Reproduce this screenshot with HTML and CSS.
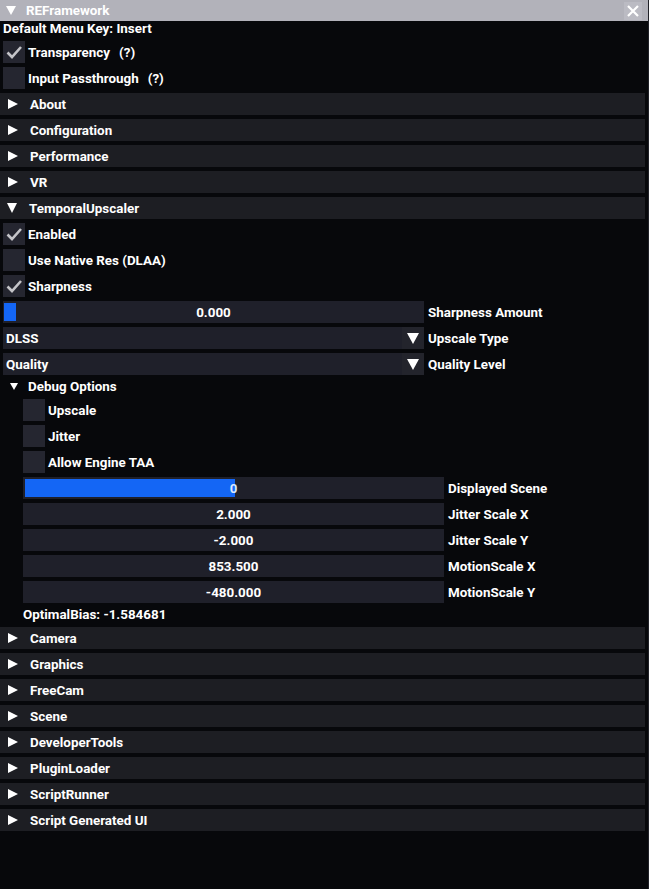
FILE: index.html
```html
<!DOCTYPE html>
<html>
<head>
<meta charset="utf-8">
<link rel="stylesheet" href="styles.css">
</head>
<body>
<div class="window">
  <div class="titlebar">
    <span class="tri-down tb"></span>
    <span class="title">REFramework</span>
    <span class="close"><svg width="12" height="12" viewBox="0 0 12 12"><path d="M1 1L11 11M11 1L1 11" stroke="#fff" stroke-width="2.2"/></svg></span>
  </div>
  <div class="content">
    <div class="text">Default Menu Key: Insert</div>
    <div class="row"><span class="box on"><svg width="22" height="22" viewBox="0 0 22 22"><path d="M4.5 11.5L9 16L18 6" fill="none" stroke="#c4c4c8" stroke-width="2.6"/></svg></span><span>Transparency</span><span class="help">(?)</span></div>
    <div class="row"><span class="box"></span><span>Input Passthrough</span><span class="help">(?)</span></div>
    <div class="header"><span class="tri-right"></span><span>About</span></div>
    <div class="header"><span class="tri-right"></span><span>Configuration</span></div>
    <div class="header"><span class="tri-right"></span><span>Performance</span></div>
    <div class="header"><span class="tri-right"></span><span>VR</span></div>
    <div class="header"><span class="tri-down"></span><span>TemporalUpscaler</span></div>
    <div class="row"><span class="box on"><svg width="22" height="22" viewBox="0 0 22 22"><path d="M4.5 11.5L9 16L18 6" fill="none" stroke="#c4c4c8" stroke-width="2.6"/></svg></span><span>Enabled</span></div>
    <div class="row"><span class="box"></span><span>Use Native Res (DLAA)</span></div>
    <div class="row"><span class="box on"><svg width="22" height="22" viewBox="0 0 22 22"><path d="M4.5 11.5L9 16L18 6" fill="none" stroke="#c4c4c8" stroke-width="2.6"/></svg></span><span>Sharpness</span></div>
    <div class="row"><div class="slider"><span class="grab small"></span><span class="val">0.000</span></div><span class="label">Sharpness Amount</span></div>
    <div class="row"><div class="combo"><span class="ctext">DLSS</span><span class="carrow"><span class="tri-down sm"></span></span></div><span class="label">Upscale Type</span></div>
    <div class="row"><div class="combo"><span class="ctext">Quality</span><span class="carrow"><span class="tri-down sm"></span></span></div><span class="label">Quality Level</span></div>
    <div class="text tree"><span class="tri-down tiny"></span><span>Debug Options</span></div>
    <div class="indent">
      <div class="row"><span class="box"></span><span>Upscale</span></div>
      <div class="row"><span class="box"></span><span>Jitter</span></div>
      <div class="row"><span class="box"></span><span>Allow Engine TAA</span></div>
      <div class="row"><div class="slider"><span class="grab wide"></span><span class="val lite">0</span></div><span class="label">Displayed Scene</span></div>
      <div class="row"><div class="slider"><span class="val">2.000</span></div><span class="label">Jitter Scale X</span></div>
      <div class="row"><div class="slider"><span class="val">-2.000</span></div><span class="label">Jitter Scale Y</span></div>
      <div class="row"><div class="slider"><span class="val">853.500</span></div><span class="label">MotionScale X</span></div>
      <div class="row"><div class="slider"><span class="val">-480.000</span></div><span class="label">MotionScale Y</span></div>
      <div class="text">OptimalBias: -1.584681</div>
    </div>
    <div class="header"><span class="tri-right"></span><span>Camera</span></div>
    <div class="header"><span class="tri-right"></span><span>Graphics</span></div>
    <div class="header"><span class="tri-right"></span><span>FreeCam</span></div>
    <div class="header"><span class="tri-right"></span><span>Scene</span></div>
    <div class="header"><span class="tri-right"></span><span>DeveloperTools</span></div>
    <div class="header"><span class="tri-right"></span><span>PluginLoader</span></div>
    <div class="header"><span class="tri-right"></span><span>ScriptRunner</span></div>
    <div class="header"><span class="tri-right"></span><span>Script Generated UI</span></div>
  </div>
</div>
</body>
</html>
```
FILE: styles.css
```css
html, body {
  margin: 0;
  padding: 0;
  background: #07080b;
}
body {
  font-family: Roboto, "Liberation Sans", sans-serif;
  font-weight: 700;
  font-size: 13.4px;
  color: #ffffff;
}
.window {
  width: 649px;
  height: 889px;
  box-sizing: border-box;
  border-right: 1px solid #202128;
  display: flex;
  flex-direction: column;
}
.titlebar {
  height: 21px;
  background: #b2b2ba;
  display: flex;
  align-items: center;
  padding-left: 6px;
  padding-right: 6px;
}
.title {
  margin-left: 10px;
  flex: 1;
}
.close {
  width: 18px;
  height: 18px;
  display: flex;
  align-items: center;
  justify-content: center;
  background: #bbbbc3;
}
.content {
  display: flex;
  flex-direction: column;
  gap: 4px;
  padding: 0 3px 0 3px;
}
.indent {
  display: flex;
  flex-direction: column;
  gap: 4px;
  padding-left: 20px;
}
.text {
  height: 16px;
  line-height: 16px;
  white-space: nowrap;
}
.row {
  height: 22px;
  display: flex;
  align-items: center;
  white-space: nowrap;
}
.box {
  width: 22px;
  height: 22px;
  flex: none;
  background: #252630;
  margin-right: 3px;
  display: flex;
}
.help {
  margin-left: 9px;
}
.header {
  height: 22px;
  margin-left: -3px;
  background: #1d1e23;
  display: flex;
  align-items: center;
  white-space: nowrap;
}
.tri-right {
  width: 0;
  height: 0;
  border-top: 5.5px solid transparent;
  border-bottom: 5.5px solid transparent;
  border-left: 10px solid #ffffff;
  margin-left: 8px;
  margin-right: 12px;
}
.header .tri-down {
  margin-left: 7px;
  margin-right: 12px;
}
.tri-down {
  width: 0;
  height: 0;
  border-left: 5.5px solid transparent;
  border-right: 5.5px solid transparent;
  border-top: 10px solid #ffffff;
}
.tri-down.tb {
  border-left-width: 5px;
  border-right-width: 5px;
  border-top-width: 9px;
}
.tri-down.sm {
  border-left-width: 6px;
  border-right-width: 6px;
  border-top-width: 11px;
}
.tri-down.tiny {
  border-left-width: 4px;
  border-right-width: 4px;
  border-top-width: 7px;
  margin-left: 7px;
  margin-right: 10px;
  position: relative;
  top: -1px;
}
.tree {
  display: flex;
  align-items: center;
}
.slider {
  position: relative;
  width: 421px;
  height: 22px;
  flex: none;
  background: #1f202a;
  display: flex;
  align-items: center;
  justify-content: center;
}
.grab {
  position: absolute;
  top: 2px;
  bottom: 2px;
  left: 2px;
  background: #1466f5;
}
.grab.small {
  left: 1px;
  width: 12px;
}
.grab.wide {
  width: 210px;
}
.val {
  position: relative;
}
.val.lite {
  color: #dbe8ff;
}
.label {
  margin-left: 4px;
}
.combo {
  width: 421px;
  height: 22px;
  flex: none;
  background: #1f202a;
  display: flex;
  align-items: center;
}
.ctext {
  flex: 1;
  padding-left: 3px;
}
.carrow {
  width: 22px;
  height: 22px;
  background: #23242c;
  display: flex;
  align-items: center;
  justify-content: center;
}
```
